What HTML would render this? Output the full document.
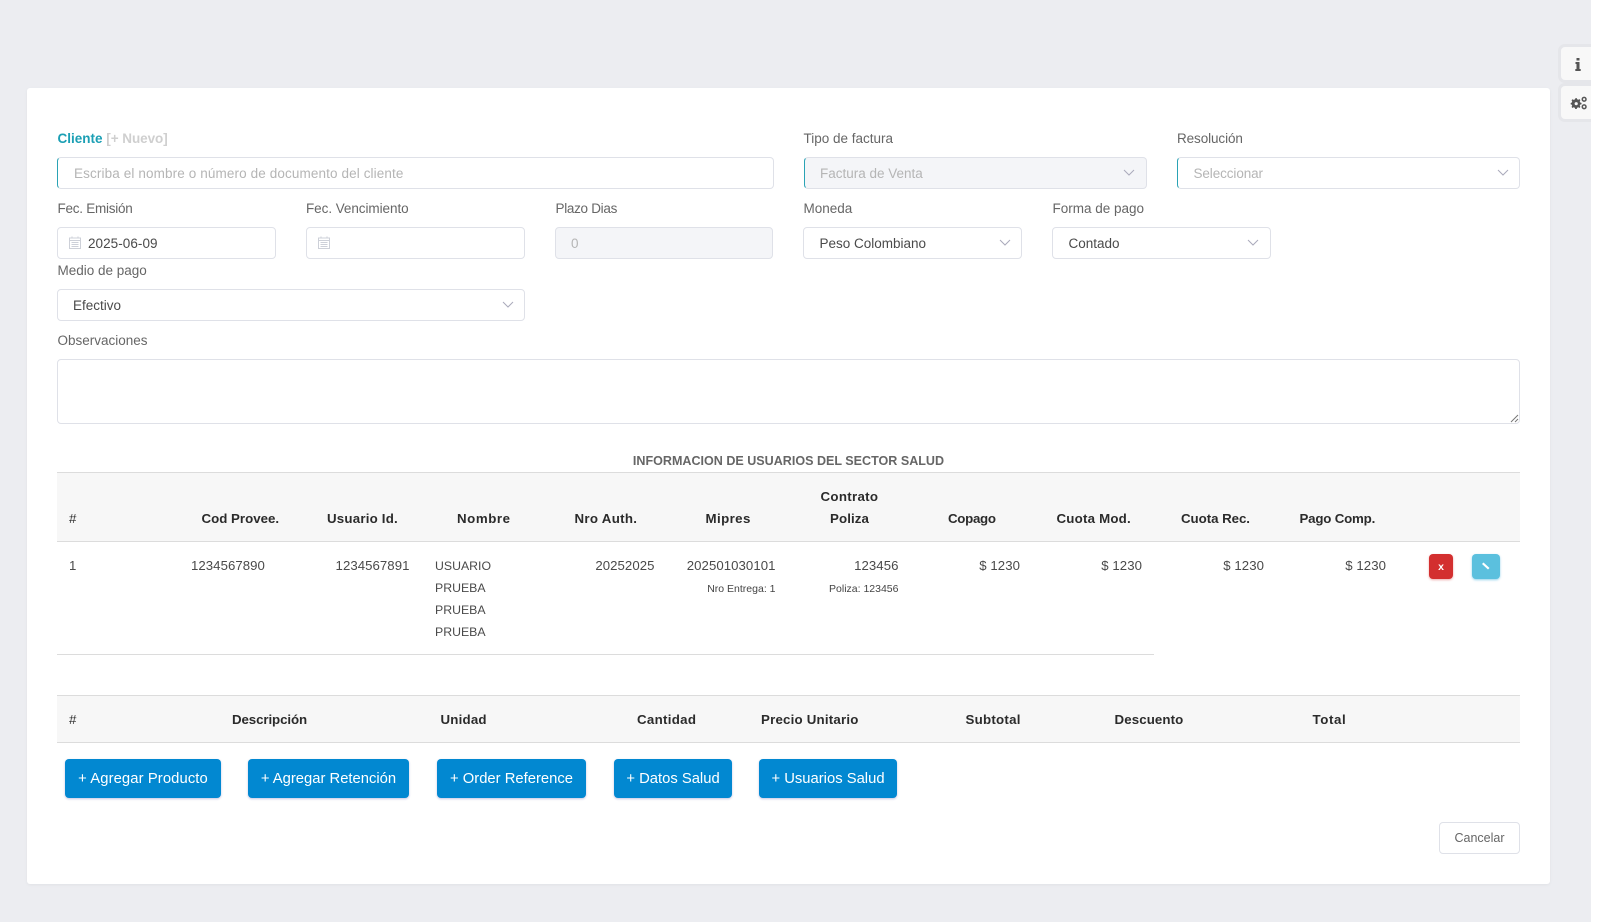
<!DOCTYPE html>
<html lang="es">
<head>
<meta charset="utf-8">
<title>Factura</title>
<style>
html,body{margin:0;padding:0;width:1606px;height:922px;overflow:hidden;background:#fff;}
body{font-family:"Liberation Sans",Arial,sans-serif;font-size:13.5px;color:#555;position:relative;}
#bg{position:absolute;left:0;top:0;width:1591px;height:922px;background:#ecedf1;}
#card{position:absolute;left:27px;top:88px;width:1523px;height:796px;background:#fff;border-radius:3px;box-shadow:0 1px 3px rgba(0,0,0,.05);}
.t{position:absolute;line-height:20px;white-space:nowrap;}
.l{color:#666;}
.v{color:#4a4a4a;}
.n{color:#4a4a4a;font-size:13.2px;letter-spacing:.06px;}
.u{color:#4a4a4a;font-size:12.3px;}
.ph{color:#b5b5b5;}
.b{font-weight:700;color:#2b2b2b;font-size:13.3px;letter-spacing:.2px;}
.r{text-align:right;}
.s{font-size:10.500px;color:#444;}
.f{position:absolute;box-sizing:border-box;height:32px;background:#fff;border:1px solid #dfe1e8;border-radius:4px;}
.acc{border-left:1px solid #2aa3b5;}
.dis{background:#f4f5f8;}
.hd{position:absolute;left:57px;width:1463px;background:#f7f7f7;border-top:1px solid #dcdcdc;border-bottom:1px solid #dcdcdc;box-sizing:border-box;}
.btn{position:absolute;top:759px;height:39px;background:#0288d1;border-radius:4px;color:#fff;font-size:14.8px;line-height:41px;text-align:center;box-shadow:0 1px 2px rgba(60,60,160,.3);white-space:nowrap;}
.chev{position:absolute;width:12px;height:7px;}
.cal{position:absolute;width:12px;height:13px;}
.tab{position:absolute;left:1558px;width:33px;box-sizing:border-box;background:#f8f8f8;border:3px solid #e5e6ea;border-right:0;border-radius:7px 0 0 7px;}
</style>
</head>
<body>
<div id="bg"></div>
<div id="card"></div>

<div class="tab" style="top:44px;height:39px"></div>
<div class="tab" style="top:83px;height:39px"></div>
<svg style="position:absolute;left:1572px;top:57px" width="12" height="15" viewBox="0 0 12 15"><path d="M4.500 1h3v2.500h-3zM3.500 5h4v7h1.200v2h-5.400v-2h1.200v-5h-1z" fill="#555"/></svg>
<svg style="position:absolute;left:1570px;top:96px" width="18" height="14" viewBox="0 0 18 15"><path fill="#555" d="M5 2.500l1.500-.3.500 1.300 1.300.5 1.200-.7 1 1.100-.7 1.200.5 1.300 1.400.4v1.500l-1.400.4-.5 1.300.7 1.200-1 1.100-1.200-.7-1.300.5-.5 1.300H5l-.5-1.300-1.300-.5-1.200.7-1-1.100.7-1.200-.5-1.300L.1 9V7.500l1.100-.4.500-1.300L1 4.600l1-1.100 1.200.7 1.300-.5z"/><circle cx="6" cy="8.200" r="1.700" fill="#f7f7f8"/><circle cx="14.500" cy="3.500" r="2" fill="none" stroke="#555" stroke-width="1.600"/><circle cx="14.500" cy="11.500" r="2" fill="none" stroke="#555" stroke-width="1.600"/></svg>

<!-- Row 1 -->
<div class="t" style="left:57.500px;top:129px;font-weight:700;color:#1b9fb4">Cliente <span style="color:#cfcfcf;letter-spacing:-.05px">[+ Nuevo]</span></div>
<div class="f acc" style="left:57px;top:157px;width:717px"></div>
<div class="t ph" style="left:74px;top:164px;letter-spacing:.12px">Escriba el nombre o número de documento del cliente</div>

<div class="t l" style="left:803.500px;top:129px">Tipo de factura</div>
<div class="f acc dis" style="left:803.500px;top:157px;width:343.500px"></div>
<div class="t ph" style="left:820px;top:164px">Factura de Venta</div>
<svg class="chev" style="left:1123px;top:169px" viewBox="0 0 12 7"><path d="M1 1l5 5 5-5" fill="none" stroke="#aab" stroke-width="1"/></svg>

<div class="t l" style="left:1177px;top:129px;letter-spacing:-.1px">Resolución</div>
<div class="f acc" style="left:1177px;top:157px;width:343px"></div>
<div class="t ph" style="left:1193.500px;top:164px;letter-spacing:-.1px">Seleccionar</div>
<svg class="chev" style="left:1496.500px;top:169px" viewBox="0 0 12 7"><path d="M1 1l5 5 5-5" fill="none" stroke="#aab" stroke-width="1"/></svg>

<!-- Row 2 -->
<div class="t l" style="left:57.500px;top:199px;letter-spacing:-.25px">Fec. Emisión</div>
<div class="f" style="left:57px;top:227px;width:219px"></div>
<svg class="cal" style="left:68.500px;top:236px" viewBox="0 0 12 13"><path d="M.5 2h11v10.500H.5zM.5 4.500h11M3 .5v2M9 .5v2M2.500 6.500h7M2.500 8.500h7M2.500 10.500h7" fill="none" stroke="#cdd0d8"/></svg>
<div class="t v" style="left:88px;top:234px;letter-spacing:.05px">2025-06-09</div>

<div class="t l" style="left:306px;top:199px;letter-spacing:-.06px">Fec. Vencimiento</div>
<div class="f" style="left:306px;top:227px;width:219px"></div>
<svg class="cal" style="left:317.500px;top:236px" viewBox="0 0 12 13"><path d="M.5 2h11v10.500H.5zM.5 4.500h11M3 .5v2M9 .5v2M2.500 6.500h7M2.500 8.500h7M2.500 10.500h7" fill="none" stroke="#cdd0d8"/></svg>

<div class="t l" style="left:555.500px;top:199px;letter-spacing:-.3px">Plazo Dias</div>
<div class="f dis" style="left:555px;top:227px;width:218px"></div>
<div class="t ph" style="left:571px;top:234px">0</div>

<div class="t l" style="left:803.500px;top:199px">Moneda</div>
<div class="f" style="left:803px;top:227px;width:219px"></div>
<div class="t v" style="left:819.500px;top:234px">Peso Colombiano</div>
<svg class="chev" style="left:998.500px;top:239px" viewBox="0 0 12 7"><path d="M1 1l5 5 5-5" fill="none" stroke="#aab" stroke-width="1"/></svg>

<div class="t l" style="left:1052.500px;top:199px">Forma de pago</div>
<div class="f" style="left:1052px;top:227px;width:219px"></div>
<div class="t v" style="left:1068.500px;top:234px">Contado</div>
<svg class="chev" style="left:1247px;top:239px" viewBox="0 0 12 7"><path d="M1 1l5 5 5-5" fill="none" stroke="#aab" stroke-width="1"/></svg>

<!-- Row 3 -->
<div class="t l" style="left:57.500px;top:260.500px">Medio de pago</div>
<div class="f" style="left:57px;top:289px;width:468px"></div>
<div class="t v" style="left:73px;top:296px">Efectivo</div>
<svg class="chev" style="left:501.500px;top:301px" viewBox="0 0 12 7"><path d="M1 1l5 5 5-5" fill="none" stroke="#aab" stroke-width="1"/></svg>

<div class="t l" style="left:57.500px;top:331px">Observaciones</div>
<div class="f" style="left:57px;top:359px;width:1463px;height:65px"></div>
<svg style="position:absolute;left:1510px;top:414px" width="9" height="9" viewBox="0 0 9 9"><path d="M1 8l7-7M5 8l3-3" stroke="#777" stroke-width="1"/></svg>

<!-- Health users table -->
<div class="t" style="left:27px;width:1523px;top:450.500px;text-align:center;font-weight:700;color:#666;font-size:12.55px">INFORMACION DE USUARIOS DEL SECTOR SALUD</div>
<div class="hd" style="top:472px;height:70px"></div>
<div class="t b" style="left:69px;top:509px;font-weight:400">#</div>
<div class="t b" style="left:201.500px;top:509px;letter-spacing:0">Cod Provee.</div>
<div class="t b" style="left:327px;top:509px">Usuario Id.</div>
<div class="t b" style="left:457px;top:509px;letter-spacing:.55px">Nombre</div>
<div class="t b" style="left:574.500px;top:509px;letter-spacing:.3px">Nro Auth.</div>
<div class="t b" style="left:705.500px;top:509px;letter-spacing:.4px">Mipres</div>
<div class="t b" style="left:820.500px;top:487px;letter-spacing:.3px">Contrato</div>
<div class="t b" style="left:830px;top:509px;letter-spacing:.1px">Poliza</div>
<div class="t b" style="left:948px;top:509px;letter-spacing:-.3px">Copago</div>
<div class="t b" style="left:1056.500px;top:509px">Cuota Mod.</div>
<div class="t b" style="left:1181px;top:509px;letter-spacing:-.05px">Cuota Rec.</div>
<div class="t b" style="left:1299.500px;top:509px;letter-spacing:-.2px">Pago Comp.</div>

<div class="t n" style="left:69px;top:556px">1</div>
<div class="t n" style="left:191px;top:556px">1234567890</div>
<div class="t n r" style="right:1196.500px;top:556px">1234567891</div>
<div class="t u" style="left:435px;top:556px">USUARIO</div>
<div class="t u" style="left:435px;top:578px">PRUEBA</div>
<div class="t u" style="left:435px;top:600px">PRUEBA</div>
<div class="t u" style="left:435px;top:622px">PRUEBA</div>
<div class="t n r" style="right:951.500px;top:556px">20252025</div>
<div class="t n r" style="right:830.500px;top:556px">202501030101</div>
<div class="t s r" style="right:830.500px;top:579px">Nro Entrega: 1</div>
<div class="t n r" style="right:707.500px;top:556px">123456</div>
<div class="t s r" style="right:707.500px;top:579px">Poliza: 123456</div>
<div class="t n r" style="right:586px;top:556px">$ 1230</div>
<div class="t n r" style="right:464px;top:556px">$ 1230</div>
<div class="t n r" style="right:342px;top:556px">$ 1230</div>
<div class="t n r" style="right:220px;top:556px">$ 1230</div>

<div style="position:absolute;left:1429px;top:554px;width:24px;height:25px;background:#d32f2f;border-radius:4px;color:#fff;font-size:10.500px;font-weight:700;text-align:center;line-height:26px;box-shadow:0 1px 2px rgba(211,47,47,.4)">x</div>
<div style="position:absolute;left:1472px;top:554px;width:28px;height:25px;background:#5bc0de;border-radius:4px;box-shadow:0 1px 2px rgba(40,170,220,.5)"><svg width="28" height="25" viewBox="0 0 28 25"><path d="M10 10l1.500-1.500 6 5.500-1.500 1.500z" fill="#fff"/></svg></div>
<div style="position:absolute;left:57px;top:654px;width:1097px;height:1px;background:#dcdcdc"></div>

<!-- Products table -->
<div class="hd" style="top:695px;height:48px"></div>
<div class="t b" style="left:69px;top:709.500px;font-weight:400">#</div>
<div class="t b" style="left:232px;top:709.500px;letter-spacing:-.1px">Descripción</div>
<div class="t b" style="left:440.500px;top:709.500px">Unidad</div>
<div class="t b" style="left:637px;top:709.500px;letter-spacing:.3px">Cantidad</div>
<div class="t b" style="left:761px;top:709.500px;letter-spacing:.2px">Precio Unitario</div>
<div class="t b" style="left:965.500px;top:709.500px;letter-spacing:.25px">Subtotal</div>
<div class="t b" style="left:1114.500px;top:709.500px;letter-spacing:.1px">Descuento</div>
<div class="t b" style="left:1312.500px;top:709.500px;letter-spacing:.6px">Total</div>

<div class="btn" style="left:65px;width:156px;letter-spacing:.1px">+ Agregar Producto</div>
<div class="btn" style="left:248px;width:161px">+ Agregar Retención</div>
<div class="btn" style="left:437px;width:149px">+ Order Reference</div>
<div class="btn" style="left:614px;width:118px">+ Datos Salud</div>
<div class="btn" style="left:759px;width:138px">+ Usuarios Salud</div>

<div class="f" style="left:1439px;top:822px;width:81px;height:32px;text-align:center;line-height:30px;color:#666;font-size:12.5px">Cancelar</div>
</body>
</html>
